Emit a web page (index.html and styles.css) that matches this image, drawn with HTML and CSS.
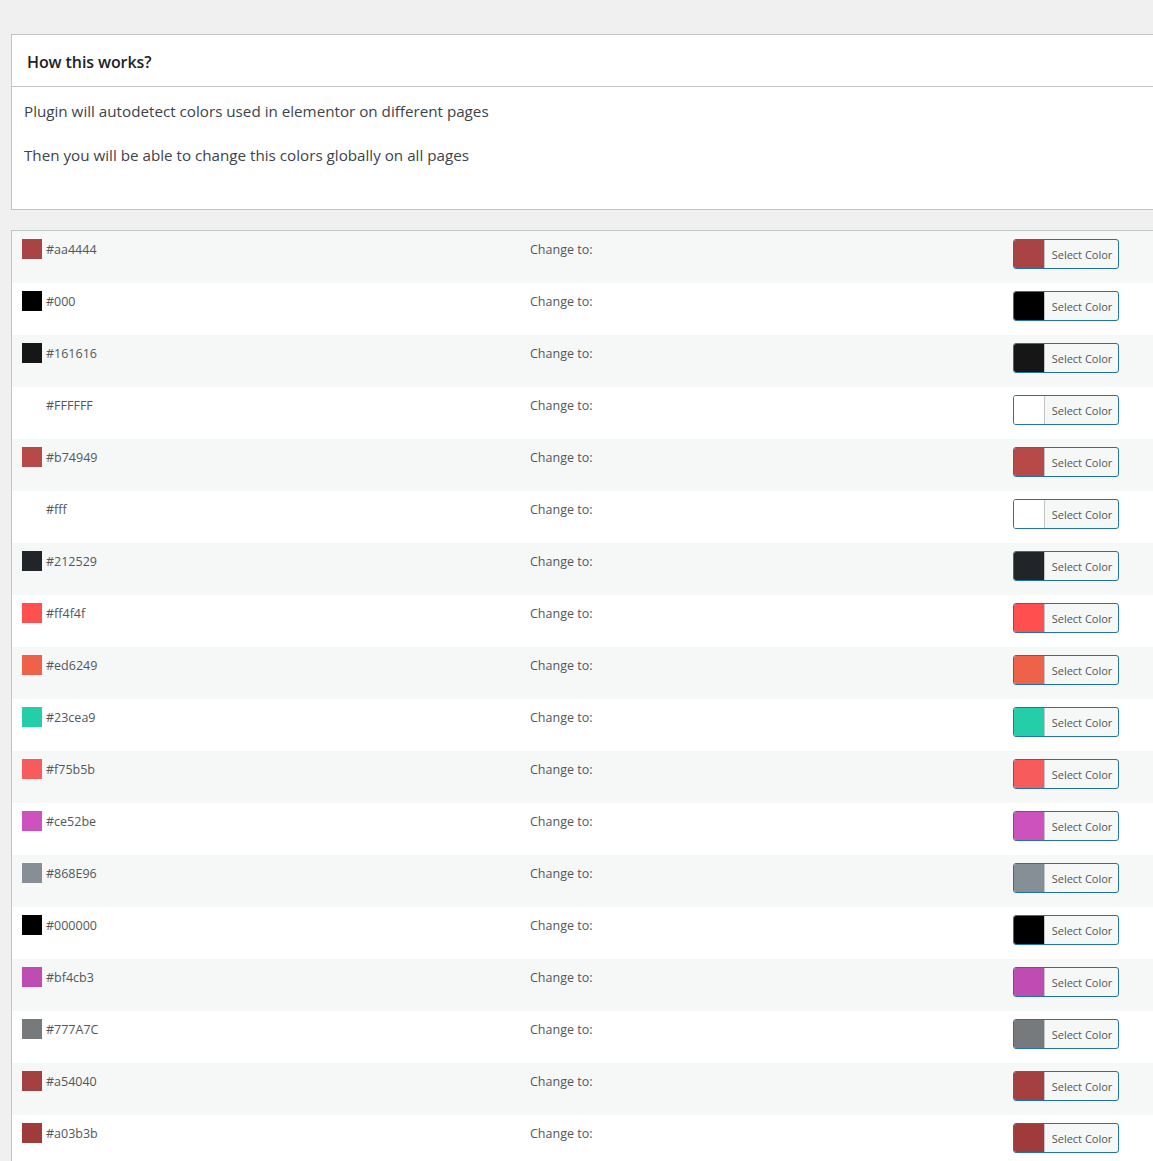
FILE: index.html
```html
<!DOCTYPE html>
<html lang="en">
<head>
<meta charset="utf-8">
<title>Colors</title>
<link rel="stylesheet" href="styles.css">
</head>
<body>
<div class="wrap">
  <div class="postbox">
    <div class="postbox-header"><h2>How this works?</h2></div>
    <div class="inside">
      <p>Plugin will autodetect colors used in elementor on different pages</p>
      <p>Then you will be able to change this colors globally on all pages</p>
    </div>
  </div>

  <div class="colors">
    <div class="row"><div class="c1"><span class="sw" style="background:#aa4444"></span>#aa4444</div><div class="c2">Change to:</div><div class="c3"><button class="picker"><span class="ps" style="background:#aa4444"></span><span class="pt">Select Color</span></button></div></div>
    <div class="row"><div class="c1"><span class="sw" style="background:#000"></span>#000</div><div class="c2">Change to:</div><div class="c3"><button class="picker"><span class="ps" style="background:#000"></span><span class="pt">Select Color</span></button></div></div>
    <div class="row"><div class="c1"><span class="sw" style="background:#161616"></span>#161616</div><div class="c2">Change to:</div><div class="c3"><button class="picker"><span class="ps" style="background:#161616"></span><span class="pt">Select Color</span></button></div></div>
    <div class="row"><div class="c1"><span class="sw" style="background:#FFFFFF"></span>#FFFFFF</div><div class="c2">Change to:</div><div class="c3"><button class="picker"><span class="ps" style="background:#FFFFFF"></span><span class="pt">Select Color</span></button></div></div>
    <div class="row"><div class="c1"><span class="sw" style="background:#b74949"></span>#b74949</div><div class="c2">Change to:</div><div class="c3"><button class="picker"><span class="ps" style="background:#b74949"></span><span class="pt">Select Color</span></button></div></div>
    <div class="row"><div class="c1"><span class="sw" style="background:#fff"></span>#fff</div><div class="c2">Change to:</div><div class="c3"><button class="picker"><span class="ps" style="background:#fff"></span><span class="pt">Select Color</span></button></div></div>
    <div class="row"><div class="c1"><span class="sw" style="background:#212529"></span>#212529</div><div class="c2">Change to:</div><div class="c3"><button class="picker"><span class="ps" style="background:#212529"></span><span class="pt">Select Color</span></button></div></div>
    <div class="row"><div class="c1"><span class="sw" style="background:#ff4f4f"></span>#ff4f4f</div><div class="c2">Change to:</div><div class="c3"><button class="picker"><span class="ps" style="background:#ff4f4f"></span><span class="pt">Select Color</span></button></div></div>
    <div class="row"><div class="c1"><span class="sw" style="background:#ed6249"></span>#ed6249</div><div class="c2">Change to:</div><div class="c3"><button class="picker"><span class="ps" style="background:#ed6249"></span><span class="pt">Select Color</span></button></div></div>
    <div class="row"><div class="c1"><span class="sw" style="background:#23cea9"></span>#23cea9</div><div class="c2">Change to:</div><div class="c3"><button class="picker"><span class="ps" style="background:#23cea9"></span><span class="pt">Select Color</span></button></div></div>
    <div class="row"><div class="c1"><span class="sw" style="background:#f75b5b"></span>#f75b5b</div><div class="c2">Change to:</div><div class="c3"><button class="picker"><span class="ps" style="background:#f75b5b"></span><span class="pt">Select Color</span></button></div></div>
    <div class="row"><div class="c1"><span class="sw" style="background:#ce52be"></span>#ce52be</div><div class="c2">Change to:</div><div class="c3"><button class="picker"><span class="ps" style="background:#ce52be"></span><span class="pt">Select Color</span></button></div></div>
    <div class="row"><div class="c1"><span class="sw" style="background:#868E96"></span>#868E96</div><div class="c2">Change to:</div><div class="c3"><button class="picker"><span class="ps" style="background:#868E96"></span><span class="pt">Select Color</span></button></div></div>
    <div class="row"><div class="c1"><span class="sw" style="background:#000000"></span>#000000</div><div class="c2">Change to:</div><div class="c3"><button class="picker"><span class="ps" style="background:#000000"></span><span class="pt">Select Color</span></button></div></div>
    <div class="row"><div class="c1"><span class="sw" style="background:#bf4cb3"></span>#bf4cb3</div><div class="c2">Change to:</div><div class="c3"><button class="picker"><span class="ps" style="background:#bf4cb3"></span><span class="pt">Select Color</span></button></div></div>
    <div class="row"><div class="c1"><span class="sw" style="background:#777A7C"></span>#777A7C</div><div class="c2">Change to:</div><div class="c3"><button class="picker"><span class="ps" style="background:#777A7C"></span><span class="pt">Select Color</span></button></div></div>
    <div class="row"><div class="c1"><span class="sw" style="background:#a54040"></span>#a54040</div><div class="c2">Change to:</div><div class="c3"><button class="picker"><span class="ps" style="background:#a54040"></span><span class="pt">Select Color</span></button></div></div>
    <div class="row"><div class="c1"><span class="sw" style="background:#a03b3b"></span>#a03b3b</div><div class="c2">Change to:</div><div class="c3"><button class="picker"><span class="ps" style="background:#a03b3b"></span><span class="pt">Select Color</span></button></div></div>
  </div>
</div>
</body>
</html>
```

FILE: styles.css
```css
html, body {
  margin: 0;
  padding: 0;
  overflow: hidden;
}
body {
  background: #f0f0f1;
  font-family: "Open Sans", "Noto Sans", "Liberation Sans", sans-serif;
  color: #3c434a;
}
.wrap {
  padding: 34px 0 0 11px;
  width: 1160px;
}
.postbox {
  background: #fff;
  border: 1px solid #c3c4c7;
}
.postbox-header {
  box-sizing: border-box;
  height: 52px;
  border-bottom: 1px solid #c3c4c7;
  display: flex;
  align-items: center;
  padding: 2px 15px 0;
}
.postbox-header h2 {
  margin: 0;
  font-size: 16px;
  font-weight: 600;
  color: #1d2327;
  letter-spacing: -0.1px;
}
.inside {
  padding: 13px 12px 21px;
}
.inside p {
  margin: 0 0 22px;
  font-size: 15.2px;
  line-height: 22px;
  color: #3c434a;
}
.colors {
  margin-top: 20px;
  border: 1px solid #c3c4c7;
  border-bottom: none;
  background: #fff;
}
.row {
  height: 52px;
  display: grid;
  grid-template-columns: 508px 483px 1fr;
  align-items: start;
  font-size: 12.5px;
  color: #50575e;
}
.row:nth-child(odd) {
  background: #f6f7f7;
}
.c1 {
  display: flex;
  align-items: flex-start;
  gap: 4px;
  padding: 9px 10px 0;
  line-height: 20px;
}
.sw {
  width: 20px;
  height: 20px;
  display: inline-block;
  margin-top: -1px;
  flex: none;
}
.c2 {
  padding: 9px 10px 0;
  line-height: 20px;
}
.c3 {
  padding: 8px 10px 0;
}
.picker {
  display: flex;
  height: 30px;
  width: 106px;
  padding: 0;
  border: 1px solid #2271b1;
  border-radius: 3px;
  background: #f6f7f7;
  overflow: hidden;
  font-family: inherit;
  cursor: pointer;
}
.ps {
  width: 30px;
  height: 100%;
  border-right: 1px solid #c3c4c7;
  flex: none;
}
.pt {
  flex: 1;
  font-size: 11px;
  line-height: 28px;
  padding: 1px 0 0 1px;
  color: #50575e;
  text-align: center;
}
```
